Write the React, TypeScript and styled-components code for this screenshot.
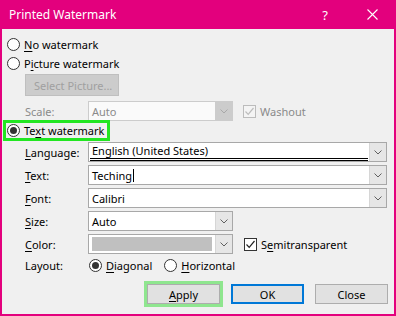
import React from "react";
import styled, { createGlobalStyle } from "styled-components";

const Global = createGlobalStyle`
  html, body { margin: 0; padding: 0; background: #f0f0f0; }
  body { font-family: "Noto Sans", "Open Sans", sans-serif; font-size: 11px; color: #000; white-space: nowrap; }
`;

const MAGENTA = "#e3007d";

const Dialog = styled.div`
  width: 396px;
  height: 316px;
  box-sizing: border-box;
  background: #f0f0f0;
  border: 2px solid ${MAGENTA};
  border-top: none;
  display: flex;
  flex-direction: column;
  overflow: hidden;
`;

const TitleBar = styled.div`
  height: 29px;
  margin: 0 -2px;
  background: ${MAGENTA};
  color: #fff;
  display: flex;
  align-items: center;
  padding-left: 9px;
  font-size: 12px;
  flex-shrink: 0;
`;

const Title = styled.div`
  flex: 1;
  margin-top: -1px;
`;

const HelpBtn = styled.div`
  width: 14px;
  font-size: 13px;
  margin-right: 35px;
  text-align: center;
`;

const CloseX = styled.svg`
  margin-right: 18px;
`;

const Body = styled.div`
  display: flex;
  flex-direction: column;
  padding: 6px 0 0 5px;
`;

const RadioRow = styled.label`
  display: flex;
  align-items: center;
  height: 19px;
  gap: 4px;
  white-space: nowrap;
`;

const RadioCircle = styled.span<{ $checked?: boolean }>`
  width: 13px;
  height: 13px;
  box-sizing: border-box;
  border: 1px solid #333;
  border-radius: 50%;
  background: #fff;
  display: inline-flex;
  align-items: center;
  justify-content: center;
  flex-shrink: 0;
  &::after {
    content: "";
    width: 7px;
    height: 7px;
    border-radius: 50%;
    background: ${(p) => (p.$checked ? "#333" : "transparent")};
  }
`;

const U = styled.span`
  text-decoration: underline;
  text-underline-offset: 2px;
`;

const SelectPictureButton = styled.div`
  margin: 1px 0 0 18px;
  width: 94px;
  height: 22px;
  box-sizing: border-box;
  background: #cccccc;
  border: 1px solid #bfbfbf;
  color: #a0a0a0;
  display: flex;
  align-items: center;
  padding-left: 8px;
  white-space: nowrap;
`;

const FormRow = styled.div<{ $mt?: number }>`
  display: flex;
  align-items: center;
  height: 20px;
  margin-top: ${(p) => p.$mt ?? 3}px;
  margin-left: 18px;
`;

const Label = styled.div<{ $disabled?: boolean }>`
  width: 63px;
  flex-shrink: 0;
  color: ${(p) => (p.$disabled ? "#8a8a8a" : "#000")};
`;

const Combo = styled.div<{ $w: number; $disabled?: boolean }>`
  width: ${(p) => p.$w}px;
  height: 20px;
  box-sizing: border-box;
  border: 1px solid ${(p) => (p.$disabled ? "#cccccc" : "#a8a8a8")};
  background: ${(p) => (p.$disabled ? "#fafafa" : "#fff")};
  display: flex;
  align-items: stretch;
  flex-shrink: 0;
`;

const ComboText = styled.div<{ $disabled?: boolean; $raised?: boolean }>`
  flex: 1;
  display: flex;
  align-items: center;
  padding-left: 3px;
  padding-bottom: ${(p) => (p.$raised ? 3 : 0)}px;
  color: ${(p) => (p.$disabled ? "#8a8a8a" : "#000")};
  position: relative;
  white-space: nowrap;
`;

const DoubleLine = styled.div`
  position: absolute;
  left: 1px;
  right: 1px;
  bottom: 0;
  height: 3px;
  box-sizing: border-box;
  border-top: 1px solid #000;
  border-bottom: 1px solid #000;
`;

const Caret = styled.span`
  display: inline-block;
  width: 1px;
  height: 13px;
  background: #000;
  margin-left: 1px;
`;

const DropBtn = styled.div<{ $disabled?: boolean }>`
  width: 16px;
  border-left: 1px solid ${(p) => (p.$disabled ? "#cccccc" : "#d6d6d6")};
  background: ${(p) => (p.$disabled ? "#cccccc" : "#e6e6e6")};
  display: flex;
  align-items: center;
  justify-content: center;
`;

const Swatch = styled.div`
  flex: 1;
  margin: 2px 3px 2px 3px;
  background: #c0c0c0;
`;

const CheckWrap = styled.label<{ $disabled?: boolean; $ml: number }>`
  display: flex;
  align-items: center;
  gap: 4px;
  margin-left: ${(p) => p.$ml}px;
  color: ${(p) => (p.$disabled ? "#8a8a8a" : "#000")};
  white-space: nowrap;
`;

const CheckBox = styled.span<{ $disabled?: boolean }>`
  width: 13px;
  height: 13px;
  box-sizing: border-box;
  border: 1px solid ${(p) => (p.$disabled ? "#bcbcbc" : "#333")};
  background: ${(p) => (p.$disabled ? "#f4f4f4" : "#fff")};
  display: inline-flex;
  align-items: center;
  justify-content: center;
`;

const GreenBox = styled.div`
  margin: -1px 0 0 -4px;
  width: 107px;
  height: 21px;
  box-sizing: border-box;
  border: 3px solid #22e622;
  display: flex;
  align-items: center;
  padding-left: 1px;
`;

const RadioGroup = styled.div`
  display: flex;
  align-items: center;
  gap: 12px;
  margin-left: 1px;
`;

const ButtonRow = styled.div`
  display: flex;
  justify-content: flex-end;
  gap: 11px;
  margin: 9px 6px 0 0;
`;

const DlgButton = styled.div<{ $variant?: "default" | "focus" }>`
  width: 73px;
  height: 20px;
  box-sizing: border-box;
  background: #e1e1e1;
  border: ${(p) => (p.$variant === "default" ? "2px solid #0078d7" : "1px solid #adadad")};
  display: flex;
  align-items: center;
  justify-content: center;
  box-shadow: ${(p) => (p.$variant === "focus" ? "0 0 0 3px #8fe68f" : "none")};
`;

const Chevron = ({ color = "#606060" }: { color?: string }) => (
  <svg width="8" height="5" viewBox="0 0 8 5">
    <path d="M0.5 0.5 L4 4 L7.5 0.5" fill="none" stroke={color} strokeWidth="1" />
  </svg>
);

const Check = ({ color }: { color: string }) => (
  <svg width="11" height="11" viewBox="0 0 11 11">
    <path d="M1.5 5.5 L4.2 8.3 L9.5 2" fill="none" stroke={color} strokeWidth="1.2" />
  </svg>
);

export default function App() {
  return (
    <>
      <Global />
      <Dialog>
        <TitleBar>
          <Title>Printed Watermark</Title>
          <HelpBtn>?</HelpBtn>
          <CloseX width="11" height="11" viewBox="0 0 11 11">
            <path d="M0.5 0.5 L10.5 10.5 M10.5 0.5 L0.5 10.5" stroke="#fff" strokeWidth="1.1" />
          </CloseX>
        </TitleBar>
        <Body>
          <RadioRow>
            <RadioCircle />
            <span>
              <U>N</U>o watermark
            </span>
          </RadioRow>
          <RadioRow>
            <RadioCircle />
            <span>
              P<U>i</U>cture watermark
            </span>
          </RadioRow>
          <SelectPictureButton>Select Picture...</SelectPictureButton>
          <FormRow $mt={5}>
            <Label $disabled>Scale:</Label>
            <Combo $w={145} $disabled>
              <ComboText $disabled>Auto</ComboText>
              <DropBtn $disabled>
                <Chevron color="#a8a8a8" />
              </DropBtn>
            </Combo>
            <CheckWrap $disabled $ml={10}>
              <CheckBox $disabled>
                <Check color="#bcbcbc" />
              </CheckBox>
              Washout
            </CheckWrap>
          </FormRow>
          <GreenBox>
            <RadioRow>
              <RadioCircle $checked />
              <span>
                Te<U>x</U>t watermark
              </span>
            </RadioRow>
          </GreenBox>
          <FormRow $mt={1}>
            <Label>
              <U>L</U>anguage:
            </Label>
            <Combo $w={299}>
              <ComboText $raised>
                English (United States)
                <DoubleLine />
              </ComboText>
              <DropBtn>
                <Chevron />
              </DropBtn>
            </Combo>
          </FormRow>
          <FormRow>
            <Label>
              <U>T</U>ext:
            </Label>
            <Combo $w={299}>
              <ComboText>
                Teching
                <Caret />
              </ComboText>
              <DropBtn>
                <Chevron />
              </DropBtn>
            </Combo>
          </FormRow>
          <FormRow>
            <Label>
              <U>F</U>ont:
            </Label>
            <Combo $w={299}>
              <ComboText>Calibri</ComboText>
              <DropBtn>
                <Chevron />
              </DropBtn>
            </Combo>
          </FormRow>
          <FormRow>
            <Label>
              <U>S</U>ize:
            </Label>
            <Combo $w={145}>
              <ComboText>Auto</ComboText>
              <DropBtn>
                <Chevron />
              </DropBtn>
            </Combo>
          </FormRow>
          <FormRow>
            <Label>
              <U>C</U>olor:
            </Label>
            <Combo $w={145}>
              <Swatch />
              <DropBtn>
                <Chevron />
              </DropBtn>
            </Combo>
            <CheckWrap $ml={11}>
              <CheckBox>
                <Check color="#222" />
              </CheckBox>
              <span>
                S<U>e</U>mitransparent
              </span>
            </CheckWrap>
          </FormRow>
          <FormRow $mt={1}>
            <Label>Layout:</Label>
            <RadioGroup>
              <RadioRow>
                <RadioCircle $checked />
                <span>
                  <U>D</U>iagonal
                </span>
              </RadioRow>
              <RadioRow>
                <RadioCircle />
                <span>
                  <U>H</U>orizontal
                </span>
              </RadioRow>
            </RadioGroup>
          </FormRow>
          <ButtonRow>
            <DlgButton $variant="focus">
              <span>
                <U>A</U>pply
              </span>
            </DlgButton>
            <DlgButton $variant="default">OK</DlgButton>
            <DlgButton>Close</DlgButton>
          </ButtonRow>
        </Body>
      </Dialog>
    </>
  );
}
